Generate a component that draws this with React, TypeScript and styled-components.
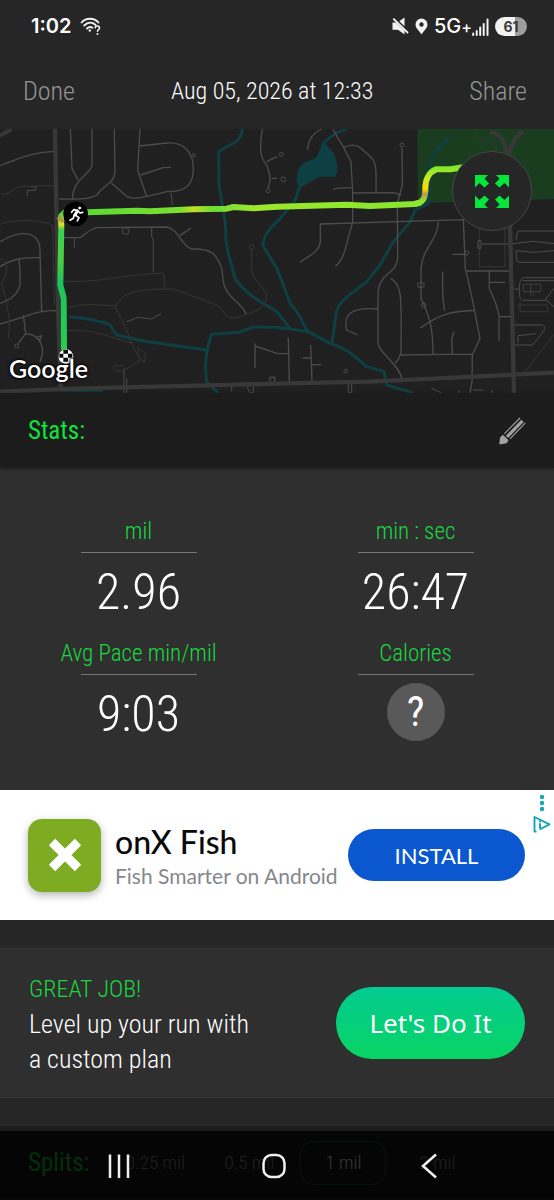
import React, { useState } from "react";
import styled, { createGlobalStyle } from "styled-components";

const narrow = `"Roboto Condensed", "Open Sans Condensed", Roboto, sans-serif`;

const GlobalStyle = createGlobalStyle`
  *, *::before, *::after { box-sizing: border-box; }
  html { background: #262626; }
  body { margin: 0; background: #262626; color: #fff; font-family: ${narrow}; font-weight: 300; }
  button { border: 0; padding: 0; background: none; color: inherit; font: inherit; cursor: pointer; }
  h1, h2, h3, p, dl, dd, dt { margin: 0; font-weight: inherit; }
  svg { display: block; flex: none; }
`;

const Page = styled.div`
  display: flex;
  flex-direction: column;
  min-height: 100vh;
`;

const StatusBar = styled.div`
  display: flex;
  justify-content: space-between;
  align-items: center;
  height: 52px;
  padding: 0 27px 0 31px;
  font-family: Inter, sans-serif;
`;

const StatusGroup = styled.div<{ $gap: number }>`
  display: flex;
  align-items: center;
  gap: ${(p) => p.$gap}px;
`;

const Clock = styled.span`
  font-size: 20px;
  font-weight: 600;
`;

const Network = styled.span`
  display: flex;
  align-items: flex-end;
  font-size: 20px;
  line-height: 20px;
  font-weight: 500;
`;

const Plus = styled.span`
  font-size: 16px;
  line-height: 18px;
`;

const Battery = styled.span`
  width: 32px;
  height: 19px;
  border-radius: 10px;
  background: linear-gradient(90deg, #f2f2f2 61%, #9d9d9d 61%);
  color: #3a3a3a;
  font-size: 14px;
  font-weight: 700;
  line-height: 19px;
  text-align: center;
`;

const Header = styled.header`
  display: flex;
  justify-content: space-between;
  align-items: center;
  height: 77px;
  padding: 0 27px 0 23px;
  font-size: 26px;
`;

const HeaderButton = styled.button`
  color: #959595;
`;

const Title = styled.h1`
  font-size: 24px;
`;

const MapPanel = styled.section`
  position: relative;
  background: #202020;
`;

const MapDrawing = styled.svg`
  width: 100%;
  height: auto;
`;

const MapCredit = styled.span`
  position: absolute;
  left: 9px;
  bottom: 10px;
  font: 600 25px/30px Lato, sans-serif;
  color: #fff;
  text-shadow: 0 0 3px #000, 0 0 3px #000, 0 0 2px #000;
`;

const ExpandButton = styled.button`
  position: absolute;
  top: 22px;
  right: 22px;
  width: 80px;
  height: 80px;
  display: grid;
  place-items: center;
  border: 1px solid #454545;
  border-radius: 50%;
  background: #262626;
`;

const SectionBar = styled.div`
  display: flex;
  justify-content: space-between;
  align-items: center;
  height: 75px;
  padding: 0 28px;
  background: #1c1c1c;
  box-shadow: 0 1px 3px #1c1c1c;
  position: relative;
`;

const SectionTitle = styled.h2`
  font-size: 25px;
  font-weight: 400;
  color: #11e33d;
`;

const StatsGrid = styled.dl`
  display: grid;
  grid-template-columns: 1fr 1fr;
  padding: 48px 0 30px;
  background: #2f2f2f;
`;

const Stat = styled.div`
  display: flex;
  flex-direction: column;
  align-items: center;
  height: 122px;
`;

const StatLabel = styled.dt`
  display: flex;
  flex-direction: column;
  align-items: center;
  gap: 4px;
  font-size: 23px;
  line-height: 32px;
  color: #18d840;
  &::after {
    content: "";
    width: 116px;
    height: 1px;
    background: #777;
  }
`;

const StatValue = styled.dd`
  display: flex;
  align-items: center;
  height: 78px;
  font-size: 50px;
`;

const HelpButton = styled.button`
  width: 58px;
  height: 58px;
  margin-bottom: 4px;
  border-radius: 50%;
  background: #595959;
  font-size: 42px;
  font-weight: 400;
  line-height: 58px;
`;

const AdBanner = styled.aside`
  position: relative;
  display: flex;
  align-items: center;
  height: 130px;
  padding: 0 29px 0 28px;
  background: #fff;
  color: #0a0a0a;
  font-family: Lato, sans-serif;
  font-weight: 400;
`;

const AppIcon = styled.div`
  display: grid;
  place-items: center;
  width: 73px;
  height: 73px;
  margin-right: 14px;
  border-radius: 14px;
  background: #7dab22;
  box-shadow: 0 3px 8px rgba(0, 0, 0, 0.3);
`;

const AdText = styled.div`
  flex: 1;
  padding-top: 6px;
  white-space: nowrap;
`;

const AdName = styled.h3`
  font-size: 32px;
  line-height: 36px;
  font-weight: 500;
`;

const AdTagline = styled.p`
  font-size: 21px;
  line-height: 32px;
  color: #85878b;
`;

const InstallButton = styled.button`
  width: 177px;
  height: 52px;
  border-radius: 26px;
  background: #0b57d0;
  color: #fff;
  font-size: 22px;
`;

const AdControls = styled.div`
  position: absolute;
  top: 4px;
  right: 3px;
`;

const PlanCard = styled.section`
  display: flex;
  justify-content: space-between;
  align-items: center;
  height: 150px;
  margin: 28px 0;
  padding: 0 29px;
  background: #2f2f2f;
  border: solid #333;
  border-width: 1px 0;
`;

const PlanText = styled.div`
  padding-top: 2px;
  font-size: 26px;
  line-height: 35px;
`;

const PlanTitle = styled.h2`
  font-size: 24px;
  color: #18d840;
`;

const PlanButton = styled.button`
  width: 189px;
  height: 72px;
  border-radius: 36px;
  background: linear-gradient(#03cb92, #08d463);
  font-family: "Noto Sans", sans-serif;
  font-size: 26px;
  font-weight: 400;
`;

const SplitsBar = styled.section`
  display: flex;
  align-items: center;
  height: 73px;
  padding: 0 28px;
  background: #1c1c1c;
`;

const SplitTabs = styled.div`
  display: flex;
  flex: 1;
  margin-left: 23px;
  gap: 8px;
`;

const SplitTab = styled.button<{ $active?: boolean }>`
  width: 86px;
  height: 44px;
  border-radius: 14px;
  border: 1px solid ${(p) => (p.$active ? "#0a6b38" : "transparent")};
  color: ${(p) => (p.$active ? "#fff" : "#999")};
  font-size: 19px;
`;

const SystemNav = styled.nav`
  position: fixed;
  inset: auto 0 0;
  display: flex;
  justify-content: center;
  align-items: center;
  gap: 131px;
  height: 69px;
  padding-right: 6px;
  background: rgba(0, 0, 0, 0.8);
`;

const NavButton = styled.button`
  width: 24px;
  height: 26px;
`;

const stats = [
  { label: "mil", value: "2.96" },
  { label: "min : sec", value: "26:47" },
  { label: "Avg Pace min/mil", value: "9:03" },
  { label: "Calories", value: null },
];

const splits = ["0.25 mil", "0.5 mil", "1 mil", "2 mil"];

const WifiIcon = () => (
  <svg width="22" height="20" viewBox="0 0 22 20" fill="none" stroke="#f2f2f2" strokeWidth="1.8" strokeLinecap="round">
    <path d="M1.500 6.500C6 1.500 14 1.500 18.500 6.500M4.200 9.500c3.500-3.600 8-3.600 11.500-.5M7 12.500c1.800-1.800 3.500-1.900 5.500-.8" />
    <circle cx="9.800" cy="14.500" r="1.200" fill="#f2f2f2" stroke="none" />
    <path d="M15.300 11.800c0-2.500 4.200-2.300 4.200.2 0 1.500-2 1.600-2 3.300" strokeWidth="1.600" />
    <circle cx="17.500" cy="18" r="1" fill="#f2f2f2" stroke="none" />
  </svg>
);

const MuteIcon = () => (
  <svg width="17" height="18" viewBox="0 0 17 18" fill="#f2f2f2">
    <path d="M.5 5.500H4L12.500 14V17.500L6 12.800H.5zM7.300 4.300 12.500.5V9.300z" />
    <path d="M1.300 1.600 16 16" stroke="#f2f2f2" strokeWidth="1.900" />
  </svg>
);

const PinIcon = () => (
  <svg width="13" height="17" viewBox="0 0 13 17" fill="#f2f2f2">
    <path fillRule="evenodd" d="M6.500.5a6 6 0 0 0-6 6c0 3.500 3.500 6 6 10 2.500-4 6-6.500 6-10a6 6 0 0 0-6-6zm0 3.800a2.200 2.200 0 1 1 0 4.400 2.200 2.200 0 0 1 0-4.400z" />
  </svg>
);

const SignalIcon = () => (
  <svg width="17" height="18" viewBox="0 0 17 18" stroke="#f2f2f2" strokeWidth="2" strokeLinecap="round">
    <path d="M1.200 15.500V17M4.700 13V17M8.200 9.500V17M11.700 6V17M15.500 1.500V17" />
  </svg>
);

const PencilIcon = () => (
  <svg width="27" height="28" viewBox="0 0 27 28" fill="none" stroke="#a2a2a2">
    <path d="M.8 27 1.500 20.500 3.800 18.200 9 23.300 7.500 25.800z" fill="#a2a2a2" strokeWidth="1" strokeLinejoin="round" />
    <path d="M8 19.800 23.500 3.800" strokeWidth="3.200" />
    <path d="M5.300 16.800 21 1M11 21.800 26.300 5.800" strokeWidth="1.100" />
  </svg>
);

const ExpandIcon = () => (
  <svg width="36" height="35" viewBox="0 0 36 35" fill="#05e63c">
    <path d="M1 1H14L10.500 4.500 15 9.500 10.500 13.500 5.500 9 1 13.500z" />
    <path d="M35 1H22L25.500 4.500 21 9.500 25.500 13.500 30.500 9 35 13.500z" />
    <path d="M1 34H14L10.500 30.500 15 25.500 10.500 21.500 5.500 26 1 21.500z" />
    <path d="M35 34H22L25.500 30.500 21 25.500 25.500 21.500 30.500 26 35 21.500z" />
  </svg>
);

const RouteMap = () => (
  <MapDrawing viewBox="0 12 1662 792" role="img" aria-label="Route map" fill="none" strokeLinejoin="round">
    <defs>
      <linearGradient id="down" x1="0" y1="260" x2="0" y2="680" gradientUnits="userSpaceOnUse">
        <stop offset="0" stopColor="#3bd04e" />
        <stop offset=".05" stopColor="#9ad028" />
        <stop offset=".09" stopColor="#e8e020" />
        <stop offset=".13" stopColor="#3bd04e" />
        <stop offset=".35" stopColor="#4ad040" />
        <stop offset=".5" stopColor="#1fc35a" />
        <stop offset="1" stopColor="#25cf4e" />
      </linearGradient>
      <linearGradient id="across" x1="260" y1="0" x2="1270" y2="0" gradientUnits="userSpaceOnUse">
        <stop offset="0" stopColor="#5bda35" />
        <stop offset=".28" stopColor="#7be030" />
        <stop offset=".32" stopColor="#c3e026" />
        <stop offset=".37" stopColor="#6cdc33" />
        <stop offset=".5" stopColor="#9be82c" />
        <stop offset="1" stopColor="#86e62e" />
      </linearGradient>
      <linearGradient id="bend" x1="0" y1="240" x2="0" y2="125" gradientUnits="userSpaceOnUse">
        <stop offset=".1" stopColor="#8ae62e" />
        <stop offset=".28" stopColor="#b59a50" />
        <stop offset=".42" stopColor="#ffd900" />
        <stop offset=".7" stopColor="#c6ea24" />
        <stop offset="1" stopColor="#7fe52e" />
      </linearGradient>
    </defs>
    <path d="M1252 12H1662V222L1254 234z" fill="#1b3d1f" />
    {/* creeks and pond */}
    <g stroke="#0e3f42" strokeWidth="9">
      <path d="M727 12C722 50 700 55 680 65L656 80 657 180 668 250 676 290 678 350 685 385 705 460C730 500 770 525 831 560L870 610" />
      <path d="M831 290C800 320 785 345 790 365L831 430C850 480 860 510 873 540 900 560 900 590 925 620" />
      <path d="M1040 12C1000 25 980 40 965 65M900 185C890 200 895 210 885 225L858 260 831 290" />
      <path d="M208 575C260 580 300 585 330 600L350 630 430 648 620 675M655 804 620 770C612 710 620 670 635 628L715 622 760 606 831 607 870 612 925 620 990 655C1040 670 1060 690 1100 725L1152 740 1160 780 1240 804" />
      <path d="M1350 35C1310 75 1290 90 1290 130L1285 235 1245 255 1230 290 1180 350 1140 420 1100 470C1050 510 1010 530 1008 570L996 655M190 796H310" />
    </g>
    <path d="M970 50 1002 85C1015 120 1015 145 1005 155L960 155 900 188C885 170 888 145 900 125 920 105 940 105 950 95z" fill="#0e3f42" />
    {/* local streets */}
    <g stroke="#4c4c4c" strokeWidth="4">
      <path d="M0 122C60 100 100 80 165 79M0 350C70 310 120 320 120 380L125 560M0 425C30 405 60 397 120 397M57 402C62 470 75 510 0 535M0 597C70 580 120 550 178 558M70 570 77 626C130 630 135 680 120 710M77 626 55 655M108 638 125 632 120 645z" />
      <path d="M211 12 216 130 234 165M276 12V120C275 145 215 165 218 222M343 12 345 140C340 180 320 170 290 210 265 225 230 222 178 222M334 174 380 214C400 225 430 218 500 200 560 200 580 180 580 130 580 80 550 50 500 54L418 63M420 12 413 135 440 215M422 150 490 128 512 127" />
      <path d="M190 338H240C260 325 265 315 290 308L500 306C540 315 540 360 575 372 640 370 650 390 665 430L672 480C690 530 725 530 738 568M540 332 572 310" />
      <path d="M787 12C775 90 785 100 800 120 810 150 815 160 804 190M800 110 831 95M815 160H831M765 655V730M765 663 831 685M810 768V757H824V768" />
      <path d="M998 12 1031 68 1053 110 1058 200V290L1043 345C1035 385 1025 410 1006 424M1031 68C1060 52 1080 65 1092 78 1130 110 1130 110 1128 200M1000 195C1010 185 1030 190 1058 188M1058 204 1180 203 1204 210" />
      <path d="M1206 68 1207 180 1192 235 1193 400C1190 450 1135 440 1134 510V650C1130 680 1200 720 1205 760M1172 460C1210 480 1203 530 1203 680 1200 700 1190 710 1185 715" />
      <path d="M900 412C930 390 958 380 961 350V297L1390 284 1396 430C1410 490 1420 530 1430 590L1440 640 1417 690 1416 770 1410 804M1202 690 1340 688 1417 688M1134 552C1050 545 1030 570 1040 615L1073 630M1315 284C1315 350 1270 360 1263 430V520C1280 560 1300 590 1299 690M1261 609C1330 560 1360 560 1425 556M1328 440C1328 490 1325 510 1334 557M1357 688C1357 650 1350 650 1362 620M1397 438H1530M1468 438V490C1475 510 1490 530 1498 575H1530M1470 472H1515M1497 575V648" />
      <path d="M865 638 868 768M932 660 936 768M831 686H865M908 699H932M936 719H964M1358 388H1395" />
      <path d="M93 185H108L106 196H82V213M223 340V368M455 308V335L460 345V442M513 202 517 240M380 590 415 577 455 582 483 566M372 730V805M380 760V805" strokeWidth="3" />
      <path d="M923 75C925 40 940 25 965 12" />
    </g>
    {/* footpaths */}
    <g stroke="#363636" strokeWidth="3">
      <path d="M5 209C40 205 40 185 70 184L165 182M0 298C50 280 120 285 158 300L163 540M190 468C300 475 350 450 490 445L496 490M170 560C240 530 290 540 345 543 375 500 400 493 520 492L650 540C680 560 670 585 710 578 760 560 800 555 800 510 790 480 760 475 755 430V370M345 543C400 650 400 690 435 712M200 617C290 610 330 640 400 655M0 400C40 420 10 460 5 480 30 560 30 600 25 640" />
      <path d="M415 672C440 680 440 700 432 712 420 705 410 690 415 672M370 722H345C338 725 338 735 345 738H368M375 735 420 705M1438 310V425H1515V310M1425 12C1430 70 1460 40 1485 50 1500 60 1480 80 1485 85M1662 628 1575 740M1552 540H1640L1645 560H1560V530" />
    </g>
    <g stroke="#4c4c4c" strokeWidth="3">
      <path d="M1662 318H1557Q1552 318 1551 326L1548 345M1548 375 1550 403Q1551 412 1560 412H1662M1445 357H1530L1600 349 1662 356M1550 377 1600 382 1662 377M1434 347H1443V370H1434z" />
      <path d="M1662 458H1572C1560 460 1558 475 1558 500 1558 520 1562 526 1572 526H1640L1662 545M1568 467H1662M1540 492H1558M1636 524 1662 490M1540 600H1627C1640 605 1640 612 1597 660H1540M1554 655V632L1607 626" />
      <path d="M1570 478H1622V500H1570zM1592 478V512M1600 500V512" strokeWidth="2" />
      <circle cx="377" cy="318" r="10" /><circle cx="582" cy="91" r="5" /><circle cx="804" cy="197" r="6" /><circle cx="50" cy="663" r="6" />
      <circle cx="1206" cy="60" r="6" /><circle cx="844" cy="88" r="6" /><circle cx="850" cy="163" r="7" /><circle cx="755" cy="365" r="7" stroke="#363636" />
      <rect x="1253" y="473" width="19" height="14" rx="4" /><circle cx="1271" cy="541" r="7" /><circle cx="1400" cy="384" r="6" /><circle cx="1037" cy="738" r="5" />
      <path d="M1045 776H1055V803H1045zM695 780V800M740 782 750 803H760V780M1295 790 1325 804M1450 795H1420M1377 795V804M1476 795V804" />
    </g>
    {/* main roads */}
    <g stroke="#383838" strokeWidth="13">
      <path d="M165 12 174 550 182 790" />
      <path d="M1530 300 1542 804M1470 20C1510 30 1515 60 1525 90M1570 20C1545 30 1535 60 1525 90" />
      <path d="M0 800 250 790 831 776 1110 770 1662 743" />
      <path d="M0 32 35 12" />
    </g>
    {/* recorded run, coloured by pace */}
    <g strokeWidth="18">
      <path d="M200 264C180 268 182 275 184 300L182 420 181 480 191 520 192 675" stroke="url(#down)" />
      <path d="M174 276 190 290" stroke="#a89a52" strokeWidth="12" />
      <path d="M188 264 410 257 450 259 580 253 680 251 700 246 760 250 831 245 1040 239 1110 243 1245 237 1262 233" stroke="url(#across)" />
      <path d="M1240 237C1270 235 1276 220 1276 190 1276 160 1290 140 1308 133L1350 133 1400 125" stroke="url(#bend)" />
    </g>
    <circle cx="227" cy="267" r="37" fill="#000" />
    <g stroke="#fff" strokeWidth="5" strokeLinecap="round">
      <circle cx="239" cy="249" r="3" fill="#fff" strokeWidth="3" />
      <path d="M215 262 221 254 232 256 240 264 248 262M222 270 220 280 210 286M227 271 237 278 232 288" />
      <path d="M232 258 225 270" strokeWidth="9" />
    </g>
    <circle cx="198" cy="695" r="22" fill="#fff" />
    <path d="M190 674H204V686H190zM178 686H190V698H178zM204 686H217V698H204zM190 698H204V710H190z" fill="#0a0a0a" />
  </MapDrawing>
);

export default function App() {
  const [split, setSplit] = useState("1 mil");
  return (
    <Page>
      <GlobalStyle />
      <StatusBar>
        <StatusGroup $gap={8}>
          <Clock>1:02</Clock>
          <WifiIcon />
        </StatusGroup>
        <StatusGroup $gap={6}>
          <MuteIcon />
          <PinIcon />
          <Network>5G<Plus>+</Plus><SignalIcon /></Network>
          <Battery>61</Battery>
        </StatusGroup>
      </StatusBar>
      <Header>
        <HeaderButton>Done</HeaderButton>
        <Title>Aug 05, 2026 at 12:33</Title>
        <HeaderButton>Share</HeaderButton>
      </Header>
      <MapPanel>
        <RouteMap />
        <MapCredit>Google</MapCredit>
        <ExpandButton aria-label="Expand map"><ExpandIcon /></ExpandButton>
      </MapPanel>
      <SectionBar>
        <SectionTitle>Stats:</SectionTitle>
        <button aria-label="Edit stats"><PencilIcon /></button>
      </SectionBar>
      <StatsGrid>
        {stats.map((s) => (
          <Stat key={s.label}>
            <StatLabel>{s.label}</StatLabel>
            <StatValue>{s.value ?? <HelpButton>?</HelpButton>}</StatValue>
          </Stat>
        ))}
      </StatsGrid>
      <AdBanner>
        <AppIcon>
          <svg width="34" height="34" viewBox="0 0 34 34" stroke="#fff" strokeWidth="9">
            <path d="M4 4 30 30M30 4 4 30" />
          </svg>
        </AppIcon>
        <AdText>
          <AdName>onX Fish</AdName>
          <AdTagline>Fish Smarter on Android</AdTagline>
        </AdText>
        <InstallButton>INSTALL</InstallButton>
        <AdControls>
          <svg width="18" height="40" viewBox="0 0 18 40" fill="#14a5b8">
            <circle cx="9" cy="3" r="2.200" /><circle cx="9" cy="9" r="2.200" /><circle cx="9" cy="15" r="2.200" />
            <path d="M3.500 37.500H1.500V23L16.500 30.300 6.500 35.500" fill="none" stroke="#14a5b8" strokeWidth="1.900" strokeLinejoin="round" />
            <path d="M6 26.500H8V28.200H6zM6 29.300H8V34H6z" />
          </svg>
        </AdControls>
      </AdBanner>
      <PlanCard>
        <PlanText>
          <PlanTitle>GREAT JOB!</PlanTitle>
          <p>Level up your run with<br />a custom plan</p>
        </PlanText>
        <PlanButton>Let's Do It</PlanButton>
      </PlanCard>
      <SplitsBar>
        <SectionTitle>Splits:</SectionTitle>
        <SplitTabs>
          {splits.map((s) => (
            <SplitTab key={s} $active={s === split} onClick={() => setSplit(s)}>{s}</SplitTab>
          ))}
        </SplitTabs>
      </SplitsBar>
      <SystemNav>
        <NavButton aria-label="Recent apps">
          <svg width="24" height="26" viewBox="0 0 24 26" stroke="#f0f0f0" strokeWidth="2.500"><path d="M3 1.500V25M12 1.500V25M21 1.500V25" /></svg>
        </NavButton>
        <NavButton aria-label="Home">
          <svg width="24" height="26" viewBox="0 0 24 26" fill="none" stroke="#f0f0f0" strokeWidth="2.500"><rect x="1.500" y="2" width="21" height="22" rx="8" /></svg>
        </NavButton>
        <NavButton aria-label="Back">
          <svg width="24" height="26" viewBox="0 0 24 26" fill="none" stroke="#f0f0f0" strokeWidth="2.500"><path d="M19 1.500 6 13 19 24.500" /></svg>
        </NavButton>
      </SystemNav>
    </Page>
  );
}
